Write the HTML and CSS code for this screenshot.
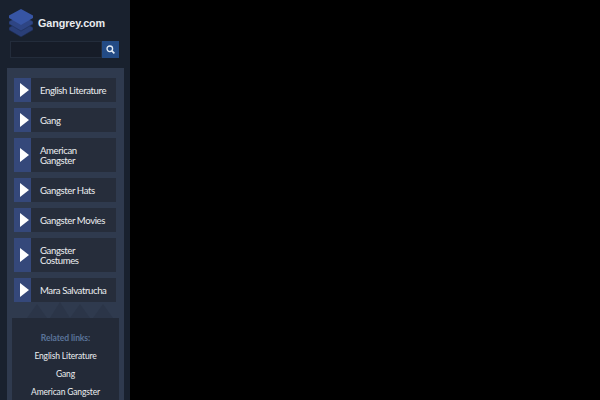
FILE: index.html
```html
<!DOCTYPE html>
<html lang="en">
<head>
    <meta charset="UTF-8">
    <title>Gangrey.com</title>
    <link rel="stylesheet" href="styles.css">
</head>
<body>
    <div class="sidebar">
        <div class="logo">
            <svg class="logo-icon" width="24" height="28" viewBox="0 0 24 28">
                <path d="M12 12 L24 18.5 L24 21 L12 28 L0 21 L0 18.5 Z" fill="#2a3f78" stroke="#1c2a4c" stroke-width="0.6"/>
                <path d="M12 6 L24 12.5 L24 15 L12 22 L0 15 L0 12.5 Z" fill="#2e4584" stroke="#1f2f58" stroke-width="0.6"/>
                <path d="M12 0 L24 6.5 L24 9 L12 16 L0 9 L0 6.5 Z" fill="#3755a4"/>
            </svg>
            <span class="logo-text">Gangrey.com</span>
        </div>
        <form class="search">
            <input class="search-input" type="text">
            <button class="search-btn" type="button">
                <svg width="9" height="9" viewBox="0 0 9 9">
                    <circle cx="3.8" cy="3.8" r="2.8" fill="none" stroke="#e4ecf5" stroke-width="1.3"/>
                    <path d="M5.9 5.9 L8.4 8.4" stroke="#e4ecf5" stroke-width="1.6"/>
                </svg>
            </button>
        </form>
        <div class="panel">
            <ul class="menu">
                <li class="menu-item"><span class="arrow"><i></i></span><a class="label">English Literature</a></li>
                <li class="menu-item"><span class="arrow"><i></i></span><a class="label">Gang</a></li>
                <li class="menu-item tall"><span class="arrow"><i></i></span><a class="label">American Gangster</a></li>
                <li class="menu-item"><span class="arrow"><i></i></span><a class="label">Gangster Hats</a></li>
                <li class="menu-item"><span class="arrow"><i></i></span><a class="label">Gangster Movies</a></li>
                <li class="menu-item tall"><span class="arrow"><i></i></span><a class="label">Gangster Costumes</a></li>
                <li class="menu-item"><span class="arrow"><i></i></span><a class="label">Mara Salvatrucha</a></li>
            </ul>
            <svg class="zigzag" width="117" height="16" viewBox="0 0 117 16">
                <path d="M20 16 L30 2 L40 16 Z M43 16 L53 0 L63 16 Z M63 16 L73 2 L83 16 Z M86 16 L96 2 L106 16 Z" fill="#2b3548"/>
            </svg>
            <div class="related">
                <h3>Related links:</h3>
                <a>English Literature</a>
                <a>Gang</a>
                <a>American Gangster</a>
            </div>
        </div>
    </div>
</body>
</html>
```

FILE: styles.css
```css
html, body {
    height: 100%;
}
body {
    margin: 0;
    background-color: #000;
    font-family: Lato, sans-serif;
    overflow: hidden;
}
.sidebar {
    width: 130px;
    height: 400px;
    background-color: #19212e;
    overflow: hidden;
}
.logo {
    display: flex;
    align-items: center;
    gap: 5px;
    padding: 9px 0 0 9px;
    height: 28px;
}
.logo-text {
    font-family: "Liberation Sans", sans-serif;
    font-weight: bold;
    font-size: 10.8px;
    letter-spacing: -0.1px;
    color: #e8ebef;
}
.search {
    display: flex;
    margin: 4px 11px 0 10px;
    height: 17px;
}
.search-input {
    flex: 1;
    min-width: 0;
    padding: 0;
    border: 1px solid #232c3b;
    background-color: #161c28;
}
.search-btn {
    width: 17px;
    padding: 0;
    border: none;
    background-color: #234b85;
    display: flex;
    align-items: center;
    justify-content: center;
}
.panel {
    margin: 10px 6px 0 7px;
    height: 332px;
    padding-top: 10px;
    box-sizing: border-box;
    background-color: #2f3a4e;
}
.menu {
    list-style: none;
    margin: 0 8px 0 7px;
    padding: 0;
}
.menu-item {
    display: flex;
    height: 24px;
    margin-bottom: 6px;
}
.menu-item.tall {
    height: 34px;
}
.arrow {
    width: 17px;
    box-sizing: border-box;
    padding-left: 6px;
    background-color: #35487a;
    display: flex;
    align-items: center;
}
.arrow i {
    border-left: 9px solid #fff;
    border-top: 7px solid transparent;
    border-bottom: 7px solid transparent;
}
.label {
    flex: 1;
    display: flex;
    align-items: center;
    padding: 1px 0 0 9px;
    background-color: #262d3b;
    color: #eceef0;
    font-size: 9.6px;
    letter-spacing: -0.4px;
    line-height: 10px;
}
.tall .label {
    padding-right: 22px;
}
.zigzag {
    display: block;
    margin-top: -6px;
}
.related {
    margin: 0 5px;
    padding-top: 15px;
    height: 82px;
    background-color: #232a38;
    text-align: center;
    font-size: 8.5px;
    letter-spacing: -0.15px;
}
.related h3 {
    margin: 0 0 7px;
    font-size: 8.6px;
    line-height: 11px;
    letter-spacing: -0.1px;
    color: #5a7398;
}
.related a {
    display: block;
    color: #eceef0;
    line-height: 11px;
    margin-bottom: 7px;
}
```
